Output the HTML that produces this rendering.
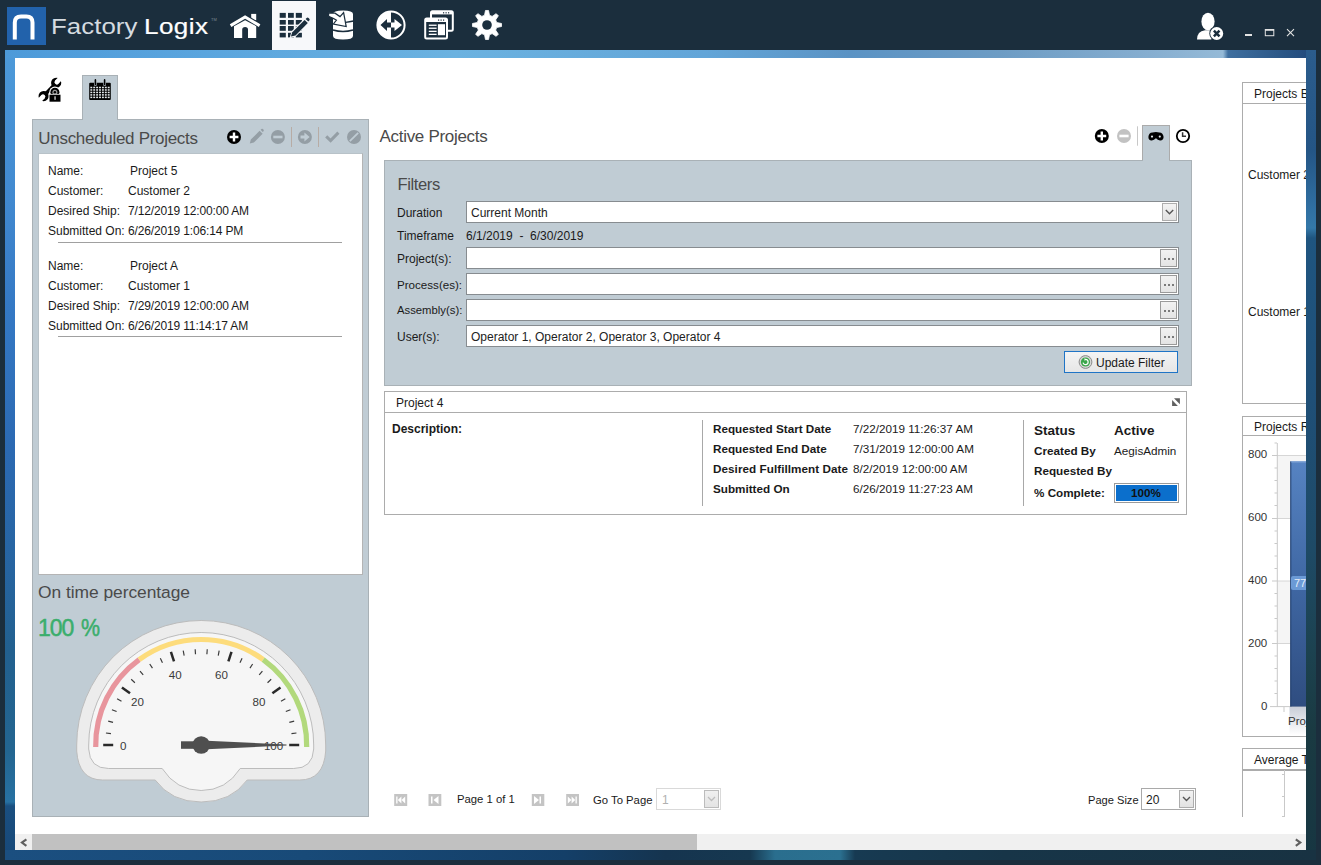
<!DOCTYPE html>
<html><head><meta charset="utf-8">
<style>
*{margin:0;padding:0;box-sizing:border-box}
html,body{width:1321px;height:865px;overflow:hidden;background:#1b2e3d;font-family:"Liberation Sans",sans-serif;color:#1a1a1a}
.a{position:absolute}
.t{position:absolute;line-height:1;white-space:nowrap;font-size:12px}
.b{font-weight:bold}
svg{position:absolute;overflow:visible}
#frame{left:5px;top:50px;width:10px;height:810px;
 background:linear-gradient(180deg,#4d9ad9 0px,#4189d0 150px,#3478c4 260px,#2b69b2 400px,#2664a0 520px,#22608f 600px,#236590 700px,#2771a2 752px,#1a4f80 756px,#174878 810px)}
#frameR{left:1306px;top:50px;width:10px;height:810px;background:linear-gradient(180deg,#2b5c8c 0,#245585 100px,#3070a2 160px,#3478a8 178px,#1f5580 188px,#1f4f77 350px,#1e4a66 500px,#1c4250 600px,#1a3a42 680px,#173642 810px)}
#frameT{left:5px;top:50px;width:1311px;height:8px;background:linear-gradient(90deg,#4d9ad9 0,#5aa5de 200px,#6bb2e0 450px,#62a5d8 700px,#5b93c4 845px,#6d9cc4 995px,#86aed0 1145px,#95bad7 1218px,#3f6f9f 1223px,#2a5585 1280px,#21487a 1311px)}
#frameB{left:5px;top:850px;width:1311px;height:10px;background:linear-gradient(90deg,#1b4f80 0,#184a78 300px,#143f68 560px,#15344f 660px,#163850 745px,#2a6e8e 770px,#2b7090 835px,#173a52 850px,#173548 1000px,#183242 1311px)}
#content{left:15px;top:58px;width:1291px;height:792px;background:#fff;overflow:hidden}
.panel{background:#c0ccd4;border:1px solid #a9b1b6}
.inp{position:absolute;background:#fff;border:1px solid #878c90;height:22px}
.dots{position:absolute;right:1px;top:1px;width:17px;height:18px;border:1px solid #9a9a9a;background:linear-gradient(#f2f2f2,#e4e4e4)}
.card{position:absolute;border:1px solid #acacac;background:#fff}
</style></head><body>
<div id="frame" class="a"></div>
<div id="frameT" class="a"></div>
<div id="frameR" class="a"></div>
<div id="frameB" class="a"></div>
<div id="content" class="a"></div>
<!-- HEADER -->
<div class="a" style="left:0;top:0;width:1321px;height:50px;background:#1b2e3d"></div>
<div class="a" style="left:7px;top:7px;width:39px;height:38px;background:#2262ab"></div>
<svg style="left:0;top:0" width="60" height="50"><path d="M14.8,39.5 V22.5 Q14.8,16.4 21,16.4 H26.4 Q32.5,16.4 32.5,22.5 V39.5" fill="none" stroke="#fff" stroke-width="4"/></svg>
<div class="t" style="left:51.3px;top:16.2px;font-size:21.7px;color:#d5dbe0;letter-spacing:0.05px;transform:scaleX(1.19);transform-origin:0 0">Factory</div>
<div class="t" style="left:144.2px;top:16.2px;font-size:21.7px;color:#fff;letter-spacing:0.35px;-webkit-text-stroke:0.2px #fff;transform:scaleX(1.2);transform-origin:0 0">Logix</div>
<div class="t" style="left:211px;top:17.6px;font-size:4px;color:#7d8a95">TM</div>
<!-- home -->
<svg style="left:0;top:0" width="270" height="50">
 <rect x="251.2" y="13.9" width="5" height="6.5" fill="#fff"/>
 <path d="M229.6,26.4 L245.1,17.2 L260.6,26.4" fill="none" stroke="#1b2e3d" stroke-width="5.6" stroke-linejoin="miter" stroke-linecap="butt"/>
 <path d="M230.6,25.6 L245.1,16.9 L259.6,25.6" fill="none" stroke="#fff" stroke-width="3" stroke-linejoin="miter" stroke-linecap="butt"/>
 <path d="M234,26.2 L245.1,20.3 L256.2,26.2 V38 H248 V29.4 Q248,26.9 245.1,26.9 Q242.2,26.9 242.2,29.4 V38 H234 Z" fill="#fff"/>
</svg>
<!-- selected tab -->
<div class="a" style="left:272px;top:1px;width:44px;height:49px;background:#f7f8fa"></div>
<svg style="left:0;top:0" width="320" height="50">
 <g fill="#1b2e3d"><rect x="279.7" y="12.9" width="6.1" height="4.9"/><rect x="288" y="12.9" width="5.8" height="4.9"/><rect x="295.8" y="12.9" width="6.1" height="4.9"/><rect x="279.7" y="20" width="6.1" height="4.6"/><rect x="288" y="20" width="5.8" height="4.6"/><rect x="295.8" y="20" width="6.1" height="4.6"/><rect x="279.7" y="26" width="6.1" height="4.8"/><rect x="288" y="26" width="5.8" height="4.8"/><rect x="295.8" y="26" width="6.1" height="4.8"/><rect x="279.7" y="32.8" width="6.1" height="4.6"/><rect x="288" y="32.8" width="5.8" height="4.6"/><rect x="295.8" y="32.8" width="6.1" height="4.6"/></g>
 <path d="M289.6,38.2 L291.4,31.6 L305,18 L309.6,22.6 L296,36.2 Z" fill="#f7f8fa"/>
 <path d="M290.9,36.6 L292.3,32.2 L304.6,19.9 L307.8,23.1 L295.5,35.4 Z" fill="#1b2e3d"/>
 <path d="M305.6,18.9 L306.6,17.9 Q307.6,17 308.6,18 L309.3,18.7 Q310.2,19.7 309.3,20.6 L308.3,21.6 Z" fill="#1b2e3d"/>
</svg>
<!-- database -->
<svg style="left:0;top:0" width="360" height="50">
 <path d="M333,14 Q333,10.4 343,10.4 Q353,10.4 353,14 V36 Q353,39.6 343,39.6 Q333,39.6 333,36 Z" fill="#fff"/>
 <path d="M333,30 Q343,33 353,30" fill="none" stroke="#1b2e3d" stroke-width="1.4"/>
 <path d="M345.5,22.4 Q349.5,22 353.5,21" fill="none" stroke="#1b2e3d" stroke-width="1.3"/>
 <path d="M328.6,12.8 L335,13.2 L340,16.6 L343.6,12.6 L346.2,26.6 L333.4,24 L336.4,20.2 L333.6,18.6 L328.6,16.2 Z" fill="#fff" stroke="#1b2e3d" stroke-width="1.2" stroke-linejoin="miter"/>
</svg>
<!-- arrows circle -->
<svg style="left:0;top:0" width="410" height="50">
 <circle cx="391" cy="25" r="13.6" fill="#1b2e3d" stroke="#fff" stroke-width="2"/>
 <path d="M391,11.4 A13.6,13.6 0 0 0 391,38.6 Z" fill="#fff"/>
 <path d="M380.5,25 L387,19 V22.5 H391 V27.5 H387 V31 Z" fill="#1b2e3d"/>
 <path d="M402,25 L394.5,19 V22.5 H391 V27.5 H394.5 V31 Z" fill="#fff"/>
</svg>
<!-- windows -->
<svg style="left:0;top:0" width="460" height="50">
 <rect x="431" y="11.2" width="21.8" height="19.5" rx="1.5" fill="none" stroke="#fff" stroke-width="2"/>
 <rect x="431" y="11.2" width="21.8" height="3.2" fill="#fff"/>
 <rect x="425.2" y="18.4" width="21.8" height="20.2" rx="1.5" fill="#1b2e3d" stroke="#fff" stroke-width="2"/>
 <rect x="425.2" y="18.4" width="21.8" height="3.6" fill="#fff"/>
 <g fill="#1b2e3d"><rect x="443" y="12.2" width="1.2" height="1.2"/><rect x="445.5" y="12.2" width="1.2" height="1.2"/><rect x="448" y="12.2" width="1.2" height="1.2"/>
 <rect x="438" y="19.5" width="1.2" height="1.2"/><rect x="440.5" y="19.5" width="1.2" height="1.2"/><rect x="443" y="19.5" width="1.2" height="1.2"/></g>
 <g fill="#fff"><rect x="428.8" y="24.6" width="7.8" height="1.3"/><rect x="428.8" y="27.6" width="7.8" height="1.3"/><rect x="428.8" y="30.7" width="7.8" height="1.3"/><rect x="428.8" y="33.7" width="7.8" height="1.3"/><rect x="437.9" y="24.2" width="7.1" height="11"/></g>
</svg>
<!-- gear -->
<svg style="left:0;top:0" width="510" height="50">
 <path d="M484.53,15.31 L485.47,10.48 L488.53,10.48 L489.47,15.31 A10.0,10.0 0 0 1 492.10,16.40 L492.10,16.40 L496.18,13.65 L498.35,15.82 L495.60,19.90 A10.0,10.0 0 0 1 496.69,22.53 L496.69,22.53 L501.52,23.47 L501.52,26.53 L496.69,27.47 A10.0,10.0 0 0 1 495.60,30.10 L495.60,30.10 L498.35,34.18 L496.18,36.35 L492.10,33.60 A10.0,10.0 0 0 1 489.47,34.69 L489.47,34.69 L488.53,39.52 L485.47,39.52 L484.53,34.69 A10.0,10.0 0 0 1 481.90,33.60 L481.90,33.60 L477.82,36.35 L475.65,34.18 L478.40,30.10 A10.0,10.0 0 0 1 477.31,27.47 L477.31,27.47 L472.48,26.53 L472.48,23.47 L477.31,22.53 A10.0,10.0 0 0 1 478.40,19.90 L478.40,19.90 L475.65,15.82 L477.82,13.65 L481.90,16.40 A10.0,10.0 0 0 1 484.53,15.31 Z" fill="#fff" stroke="#fff" stroke-width="0.8" stroke-linejoin="round"/>
 <circle cx="487" cy="25" r="4.8" fill="#1b2e3d"/>
</svg>
<!-- user / window buttons -->
<svg style="left:0;top:0" width="1321" height="50">
 <ellipse cx="1208" cy="21.5" rx="6.6" ry="8.8" fill="#fff"/>
 <path d="M1197,39.6 Q1197,31 1205,30.2 L1211,30.2 Q1216,31 1217,34 L1211,39.6 Z" fill="#fff"/>
 <circle cx="1216.7" cy="33.5" r="7.4" fill="#1b2e3d"/>
 <circle cx="1216.7" cy="33.5" r="6.5" fill="#fff"/>
 <circle cx="1216.7" cy="33.5" r="5.2" fill="#1b2e3d" opacity="0"/>
 <path d="M1213.9,30.7 L1219.5,36.3 M1219.5,30.7 L1213.9,36.3" stroke="#1b2e3d" stroke-width="2.5"/>
 <rect x="1245" y="34" width="7" height="2" fill="#e3e3e3"/>
 <rect x="1265.3" y="29.5" width="8.5" height="6.2" fill="none" stroke="#e3e3e3" stroke-width="1"/>
 <rect x="1265" y="29" width="9" height="1.8" fill="#e3e3e3"/>
 <path d="M1287,29.2 L1294,36.2 M1294,29.2 L1287,36.2" stroke="#e3e3e3" stroke-width="1.1"/>
</svg>

<!-- TABS -->
<svg style="left:0;top:0" width="130" height="125">
 <g transform="translate(49.9,89.45) rotate(-46.5)">
  <rect x="-7" y="-1.7" width="14" height="3.4" fill="#000"/>
  <circle cx="9.1" cy="0" r="5.1" fill="#000"/>
  <circle cx="10" cy="0" r="2.3" fill="#fff"/>
  <rect x="10" y="-2.3" width="6" height="4.6" fill="#fff"/>
  <circle cx="-9.1" cy="0" r="5.1" fill="#000"/>
  <circle cx="-10" cy="0" r="2.3" fill="#fff"/>
  <rect x="-16" y="-2.3" width="6" height="4.6" fill="#fff"/>
 </g>
 <circle cx="54.9" cy="92.2" r="5.6" fill="#fff"/>
 <circle cx="54.9" cy="92.2" r="4.5" fill="#000"/>
 <circle cx="54.9" cy="92.2" r="2.5" fill="#9a9a9a"/>
 <circle cx="54.9" cy="92.2" r="1.2" fill="#000"/>
 <rect x="48.7" y="93.9" width="12.6" height="8.6" fill="#fff"/>
 <rect x="49.5" y="94.7" width="11" height="7" fill="#000"/>
 <rect x="54.4" y="96.3" width="1.3" height="3.5" fill="#d8d8d8"/>
</svg>
<div class="a panel" style="left:82px;top:75px;width:36px;height:46px;border-bottom:none"></div>
<div class="a panel" style="left:32px;top:119px;width:337px;height:698px"></div>
<div class="a" style="left:83px;top:119px;width:34px;height:2px;background:#c0ccd4"></div>
<svg style="left:0;top:0" width="130" height="125">
 <rect x="89.2" y="82.8" width="21.6" height="17.2" rx="1" fill="#000"/>
 <g fill="#e4e9ec"><rect x="90.35" y="86.75" width="1.9" height="1.5"/><rect x="90.35" y="89.22" width="1.9" height="1.5"/><rect x="90.35" y="91.69" width="1.9" height="1.5"/><rect x="90.35" y="94.16" width="1.9" height="1.5"/><rect x="90.35" y="96.63" width="1.9" height="1.5"/><rect x="93.25" y="86.75" width="1.9" height="1.5"/><rect x="93.25" y="89.22" width="1.9" height="1.5"/><rect x="93.25" y="91.69" width="1.9" height="1.5"/><rect x="93.25" y="94.16" width="1.9" height="1.5"/><rect x="93.25" y="96.63" width="1.9" height="1.5"/><rect x="96.15" y="86.75" width="1.9" height="1.5"/><rect x="96.15" y="89.22" width="1.9" height="1.5"/><rect x="96.15" y="91.69" width="1.9" height="1.5"/><rect x="96.15" y="94.16" width="1.9" height="1.5"/><rect x="96.15" y="96.63" width="1.9" height="1.5"/><rect x="99.05" y="86.75" width="1.9" height="1.5"/><rect x="99.05" y="89.22" width="1.9" height="1.5"/><rect x="99.05" y="91.69" width="1.9" height="1.5"/><rect x="99.05" y="94.16" width="1.9" height="1.5"/><rect x="99.05" y="96.63" width="1.9" height="1.5"/><rect x="101.95" y="86.75" width="1.9" height="1.5"/><rect x="101.95" y="89.22" width="1.9" height="1.5"/><rect x="101.95" y="91.69" width="1.9" height="1.5"/><rect x="101.95" y="94.16" width="1.9" height="1.5"/><rect x="101.95" y="96.63" width="1.9" height="1.5"/><rect x="104.85" y="86.75" width="1.9" height="1.5"/><rect x="104.85" y="89.22" width="1.9" height="1.5"/><rect x="104.85" y="91.69" width="1.9" height="1.5"/><rect x="104.85" y="94.16" width="1.9" height="1.5"/><rect x="104.85" y="96.63" width="1.9" height="1.5"/><rect x="107.75" y="86.75" width="1.9" height="1.5"/><rect x="107.75" y="89.22" width="1.9" height="1.5"/><rect x="107.75" y="91.69" width="1.9" height="1.5"/><rect x="107.75" y="94.16" width="1.9" height="1.5"/><rect x="107.75" y="96.63" width="1.9" height="1.5"/></g>
 <rect x="94.1" y="78.6" width="2.6" height="7.4" rx="1.3" fill="#c0ccd4"/><rect x="103.3" y="78.6" width="2.6" height="7.4" rx="1.3" fill="#c0ccd4"/>
 <rect x="94.6" y="79.1" width="1.6" height="6.3" rx="0.8" fill="#000"/><rect x="103.8" y="79.1" width="1.6" height="6.3" rx="0.8" fill="#000"/>
</svg>

<!-- LEFT PANEL -->
<div class="t" style="left:38.3px;top:129.6px;font-size:17px;color:#4a4a4a;letter-spacing:-0.3px">Unscheduled Projects</div>
<svg style="left:0;top:0" width="370" height="160">
 <circle cx="234" cy="137" r="7" fill="#000"/>
 <path d="M234,132.6 V141.4 M229.6,137 H238.4" stroke="#fff" stroke-width="2.4"/>
 <path d="M249.8,143.6 L250.8,139.6 L259.6,130.8 L262.6,133.8 L253.8,142.6 Z" fill="#949ea5"/>
 <path d="M260.6,129.8 L261.4,129 Q262.2,128.4 262.9,129.1 L263.6,129.8 Q264.2,130.6 263.5,131.3 L262.7,132.1 Z" fill="#949ea5"/>
 <circle cx="277.9" cy="137" r="7" fill="#949ea5"/>
 <rect x="273.3" y="135.7" width="9.2" height="2.6" fill="#c0ccd4"/>
 <rect x="291" y="127" width="1" height="20" fill="#b7aca5"/>
 <circle cx="304.9" cy="137" r="7" fill="#949ea5"/>
 <path d="M300.5,135.6 H304.4 V132.4 L309.6,137 L304.4,141.6 V138.4 H300.5 Z" fill="#c0ccd4"/>
 <rect x="318" y="127" width="1" height="20" fill="#b7aca5"/>
 <path d="M326.2,136.4 L330.6,140.6 L338.4,132.6" fill="none" stroke="#949ea5" stroke-width="3"/>
 <circle cx="354" cy="137" r="7" fill="#949ea5"/>
 <path d="M349.8,141.2 L358.2,132.8" stroke="#c0ccd4" stroke-width="1.8"/>
</svg>
<div class="a" style="left:38px;top:153px;width:325px;height:422px;background:#fff;border-right:1px solid #b4b4b4;border-bottom:1px solid #b4b4b4;border-top:1px solid #b8c2c8;border-left:1px solid #b8c2c8"></div>
<div class="t" style="left:48px;top:165px">Name:</div><div class="t" style="left:130px;top:165px">Project 5</div>
<div class="t" style="left:48px;top:185px">Customer:</div><div class="t" style="left:128px;top:185px">Customer 2</div>
<div class="t" style="left:48px;top:205px">Desired Ship:</div><div class="t" style="left:128px;top:205px;letter-spacing:-0.15px">7/12/2019 12:00:00 AM</div>
<div class="t" style="left:48px;top:225px">Submitted On:</div><div class="t" style="left:128px;top:225px;letter-spacing:-0.15px">6/26/2019 1:06:14 PM</div>
<div class="a" style="left:58px;top:242px;width:284px;height:1px;background:#a0a0a0"></div>
<div class="t" style="left:48px;top:260px">Name:</div><div class="t" style="left:130px;top:260px">Project A</div>
<div class="t" style="left:48px;top:280px">Customer:</div><div class="t" style="left:128px;top:280px">Customer 1</div>
<div class="t" style="left:48px;top:300px">Desired Ship:</div><div class="t" style="left:128px;top:300px;letter-spacing:-0.15px">7/29/2019 12:00:00 AM</div>
<div class="t" style="left:48px;top:320px">Submitted On:</div><div class="t" style="left:128px;top:320px;letter-spacing:-0.15px">6/26/2019 11:14:17 AM</div>
<div class="a" style="left:58px;top:336px;width:284px;height:1px;background:#a0a0a0"></div>

<div class="t" style="left:38.1px;top:583.6px;font-size:17.4px;color:#4a4a4a;letter-spacing:-0.05px">On time percentage</div>
<div class="t" style="left:38px;top:617px;font-size:23px;color:#3aae6c;letter-spacing:-1.1px;-webkit-text-stroke:0.5px #3aae6c">100</div><div class="t" style="left:81px;top:617px;font-size:23px;color:#3aae6c;-webkit-text-stroke:0.5px #3aae6c;transform:scaleX(0.93);transform-origin:0 0">%</div>

<svg style="left:0;top:0" width="340" height="820">
<path d="M76.7,745.0 A124.5,124.5 0 0 1 325.7,745.0 L325.7,751.0 Q323.7,780.0 299.7,780.0 L247.2,780.0 Q231.2,802.0 201.2,802.0 Q171.2,802.0 155.2,780.0 L102.69999999999999,780.0 Q78.69999999999999,780.0 76.7,751.0 Z" fill="#ececec" stroke="#bcbcbc" stroke-width="1"/>
<path d="M88.7,745.0 A112.5,112.5 0 0 1 313.7,745.0 L313.7,749.0 Q312.7,768.5 293.7,768.5 L240.2,768.5 Q226.2,790.5 201.2,790.5 Q176.2,790.5 162.2,768.5 L108.69999999999999,768.5 Q89.69999999999999,768.5 88.7,749.0 Z" fill="#f6f6f6" stroke="#b5b5b5" stroke-width="0.9"/>
<path d="M95.72,746.99 A105.5,105.5 0 0 1 139.19,659.65" fill="none" stroke="#e8959d" stroke-width="5.2"/>
<path d="M139.19,659.65 A105.5,105.5 0 0 1 263.21,659.65" fill="none" stroke="#fddc7c" stroke-width="5.2"/>
<path d="M263.21,659.65 A105.5,105.5 0 0 1 306.68,746.99" fill="none" stroke="#b2d97c" stroke-width="5.2"/>
<line x1="110.92" y1="733.59" x2="105.96" y2="732.97" stroke="#3a3a3a" stroke-width="1.15"/>
<line x1="113.06" y1="722.37" x2="108.22" y2="721.13" stroke="#3a3a3a" stroke-width="1.15"/>
<line x1="116.59" y1="711.50" x2="111.94" y2="709.66" stroke="#3a3a3a" stroke-width="1.15"/>
<line x1="121.46" y1="701.16" x2="117.07" y2="698.75" stroke="#3a3a3a" stroke-width="1.15"/>
<line x1="134.86" y1="682.71" x2="131.22" y2="679.28" stroke="#3a3a3a" stroke-width="1.15"/>
<line x1="143.19" y1="674.88" x2="140.01" y2="671.03" stroke="#3a3a3a" stroke-width="1.15"/>
<line x1="152.44" y1="668.17" x2="149.76" y2="663.94" stroke="#3a3a3a" stroke-width="1.15"/>
<line x1="162.45" y1="662.66" x2="160.33" y2="658.14" stroke="#3a3a3a" stroke-width="1.15"/>
<line x1="184.15" y1="655.61" x2="183.21" y2="650.70" stroke="#3a3a3a" stroke-width="1.15"/>
<line x1="195.49" y1="654.18" x2="195.17" y2="649.19" stroke="#3a3a3a" stroke-width="1.15"/>
<line x1="206.91" y1="654.18" x2="207.23" y2="649.19" stroke="#3a3a3a" stroke-width="1.15"/>
<line x1="218.25" y1="655.61" x2="219.19" y2="650.70" stroke="#3a3a3a" stroke-width="1.15"/>
<line x1="239.95" y1="662.66" x2="242.07" y2="658.14" stroke="#3a3a3a" stroke-width="1.15"/>
<line x1="249.96" y1="668.17" x2="252.64" y2="663.94" stroke="#3a3a3a" stroke-width="1.15"/>
<line x1="259.21" y1="674.88" x2="262.39" y2="671.03" stroke="#3a3a3a" stroke-width="1.15"/>
<line x1="267.54" y1="682.71" x2="271.18" y2="679.28" stroke="#3a3a3a" stroke-width="1.15"/>
<line x1="280.94" y1="701.16" x2="285.33" y2="698.75" stroke="#3a3a3a" stroke-width="1.15"/>
<line x1="285.81" y1="711.50" x2="290.46" y2="709.66" stroke="#3a3a3a" stroke-width="1.15"/>
<line x1="289.34" y1="722.37" x2="294.18" y2="721.13" stroke="#3a3a3a" stroke-width="1.15"/>
<line x1="291.48" y1="733.59" x2="296.44" y2="732.97" stroke="#3a3a3a" stroke-width="1.15"/>
<line x1="113.20" y1="745.00" x2="103.20" y2="745.00" stroke="#2a2a2a" stroke-width="2.5"/>
<line x1="130.01" y1="693.27" x2="121.92" y2="687.40" stroke="#2a2a2a" stroke-width="2.5"/>
<line x1="174.01" y1="661.31" x2="170.92" y2="651.80" stroke="#2a2a2a" stroke-width="2.5"/>
<line x1="228.39" y1="661.31" x2="231.48" y2="651.80" stroke="#2a2a2a" stroke-width="2.5"/>
<line x1="272.39" y1="693.27" x2="280.48" y2="687.40" stroke="#2a2a2a" stroke-width="2.5"/>
<line x1="289.20" y1="745.00" x2="299.20" y2="745.00" stroke="#2a2a2a" stroke-width="2.5"/>
<text x="123.2" y="750.0" text-anchor="middle" font-family="Liberation Sans" font-size="11.6" fill="#3a3a3a">0</text>
<text x="137.5" y="706.0" text-anchor="middle" font-family="Liberation Sans" font-size="11.6" fill="#3a3a3a">20</text>
<text x="175.2" y="679.0" text-anchor="middle" font-family="Liberation Sans" font-size="11.6" fill="#3a3a3a">40</text>
<text x="221.5" y="679.0" text-anchor="middle" font-family="Liberation Sans" font-size="11.6" fill="#3a3a3a">60</text>
<text x="259.0" y="706.0" text-anchor="middle" font-family="Liberation Sans" font-size="11.6" fill="#3a3a3a">80</text>
<text x="273.6" y="750.0" text-anchor="middle" font-family="Liberation Sans" font-size="11.6" fill="#3a3a3a">100</text>
<rect x="181" y="741.3" width="20" height="7.5" fill="#4f4f4f"/>
<path d="M201.2,740.4 L286.5,744.6 L286.5,745.4 L201.2,749.6 Z" fill="#4f4f4f"/>
<circle cx="201.2" cy="745.0" r="8.8" fill="#4f4f4f"/>
</svg>
<!-- CENTER -->
<div class="t" style="left:379.5px;top:128.2px;font-size:17px;color:#4a4a4a;letter-spacing:-0.3px">Active Projects</div>
<svg style="left:0;top:0" width="1200" height="170">
 <circle cx="1101.8" cy="136" r="7" fill="#000"/>
 <path d="M1101.8,131.6 V140.4 M1097.4,136 H1106.2" stroke="#fff" stroke-width="2.4"/>
 <circle cx="1124" cy="136" r="7" fill="#c2c2c2"/>
 <rect x="1119.4" y="134.7" width="9.2" height="2.6" fill="#fff"/>
 <rect x="1137" y="126.3" width="1" height="19.4" fill="#c8c8c8"/>
</svg>
<div class="a" style="left:1142px;top:125px;width:28px;height:36px;background:#c0ccd4;border:1px solid #ababab;border-bottom:none"></div>
<div class="a panel" style="left:384px;top:160px;width:808px;height:226px"></div>
<div class="a" style="left:1143px;top:160px;width:26px;height:2px;background:#c0ccd4"></div>
<svg style="left:0;top:0" width="1200" height="170">
 <path d="M1148.4,137 Q1148.6,132.6 1152.5,132.4 Q1155.9,131.6 1159.3,132.4 Q1163.2,132.6 1163.6,137 Q1163.4,140.6 1160,140.4 Q1157.4,140 1156.4,138.6 H1155.4 Q1154.4,140 1151.8,140.4 Q1148.4,140.6 1148.4,137 Z" fill="#000"/>
 <circle cx="1152" cy="136.6" r="1.1" fill="#dfe5e9"/><circle cx="1159.8" cy="136.6" r="1.1" fill="#dfe5e9"/>
 <circle cx="1183" cy="136" r="6.2" fill="none" stroke="#000" stroke-width="1.8"/>
 <path d="M1182.6,132.3 V136.2 H1186" fill="none" stroke="#333" stroke-width="1.5"/>
</svg>

<div class="t" style="left:397.5px;top:177px;font-size:16.6px;color:#4a4a4a;letter-spacing:-0.4px">Filters</div>
<div class="t" style="left:397px;top:206.5px">Duration</div>
<div class="inp" style="left:466px;top:201px;width:713px"></div>
<div class="t" style="left:471px;top:206.5px;color:#222">Current Month</div>
<div class="a" style="left:1162px;top:203px;width:15px;height:18px;border:1px solid #adadad;background:linear-gradient(#f3f3f3,#e2e2e2)"></div>
<svg style="left:0;top:0" width="1200" height="230"><path d="M1165.8,210 L1169.5,213.8 L1173.2,210" fill="none" stroke="#555" stroke-width="1.4"/></svg>
<div class="t" style="left:397px;top:230px">Timeframe</div>
<div class="t" style="left:466px;top:230px">6/1/2019&nbsp; -&nbsp; 6/30/2019</div>
<div class="t" style="left:397px;top:252.8px">Project(s):</div>
<div class="inp" style="left:466px;top:247px;width:713px"><div class="dots"></div></div>
<div class="t" style="left:397px;top:279px;font-size:11.6px">Process(es):</div>
<div class="inp" style="left:466px;top:273px;width:713px"><div class="dots"></div></div>
<div class="t" style="left:397px;top:305px;font-size:11.3px">Assembly(s):</div>
<div class="inp" style="left:466px;top:299px;width:713px"><div class="dots"></div></div>
<div class="t" style="left:397px;top:331px">User(s):</div>
<div class="inp" style="left:466px;top:325px;width:713px"><div class="dots"></div></div>
<div class="t" style="left:471px;top:331px;color:#222">Operator 1, Operator 2, Operator 3, Operator 4</div>
<svg style="left:0;top:0" width="1200" height="360">
 <g fill="#7a7a7a">
  <rect x="1164" y="258" width="2" height="2"/><rect x="1168" y="258" width="2" height="2"/><rect x="1172" y="258" width="2" height="2"/>
  <rect x="1164" y="284" width="2" height="2"/><rect x="1168" y="284" width="2" height="2"/><rect x="1172" y="284" width="2" height="2"/>
  <rect x="1164" y="310" width="2" height="2"/><rect x="1168" y="310" width="2" height="2"/><rect x="1172" y="310" width="2" height="2"/>
  <rect x="1164" y="336" width="2" height="2"/><rect x="1168" y="336" width="2" height="2"/><rect x="1172" y="336" width="2" height="2"/>
 </g>
</svg>
<div class="a" style="left:1064px;top:351px;width:114px;height:22px;border:1px solid #1f74c6;background:linear-gradient(#f4f4f4,#e6e6e6)"></div>
<svg style="left:0;top:0" width="1200" height="380">
 <circle cx="1085.5" cy="362" r="6.4" fill="#d8d8d8" stroke="#8a8a8a" stroke-width="1"/>
 <circle cx="1085.5" cy="362" r="4.6" fill="#3aa64a"/>
 <path d="M1083,362.6 A2.6,2.6 0 1 0 1085.3,359.4" fill="none" stroke="#fff" stroke-width="1.2"/>
 <path d="M1084.4,358.2 L1086.6,359.5 L1084.6,360.8 Z" fill="#fff"/>
</svg>
<div class="t" style="left:1096px;top:356.5px;color:#1a1a1a">Update Filter</div>

<!-- CARD -->
<div class="card" style="left:384px;top:391px;width:803px;height:124px"></div>
<div class="a" style="left:385px;top:412px;width:801px;height:1px;background:#acacac"></div>
<div class="t" style="left:396px;top:397px">Project 4</div>
<svg style="left:0;top:0" width="1200" height="420"><path d="M1174,398.2 H1179.9 V404.2 Z M1172.1,400 V405.9 H1177.9 Z" fill="#606060"/></svg>
<div class="t b" style="left:392px;top:422.5px">Description:</div>
<div class="a" style="left:702px;top:420px;width:1px;height:86px;background:#a8a8a8"></div>
<div class="a" style="left:1023px;top:420px;width:1px;height:86px;background:#a8a8a8"></div>
<div class="t b" style="left:713px;top:422.5px;font-size:11.7px">Requested Start Date</div><div class="t" style="left:853px;top:422.5px;font-size:11.7px">7/22/2019 11:26:37 AM</div>
<div class="t b" style="left:713px;top:442.5px;font-size:11.7px">Requested End Date</div><div class="t" style="left:853px;top:442.5px;font-size:11.7px">7/31/2019 12:00:00 AM</div>
<div class="t b" style="left:713px;top:462.5px;font-size:11.7px;letter-spacing:0.05px">Desired Fulfillment Date</div><div class="t" style="left:853px;top:462.5px;font-size:11.7px">8/2/2019 12:00:00 AM</div>
<div class="t b" style="left:713px;top:482.5px;font-size:11.7px">Submitted On</div><div class="t" style="left:853px;top:482.5px;font-size:11.7px">6/26/2019 11:27:23 AM</div>
<div class="t b" style="left:1034px;top:424px;font-size:13.5px">Status</div><div class="t b" style="left:1114px;top:424px;font-size:13.5px">Active</div>
<div class="t b" style="left:1034px;top:445px;font-size:11.7px">Created By</div><div class="t" style="left:1114px;top:445px;font-size:11.7px">AegisAdmin</div>
<div class="t b" style="left:1034px;top:465px;font-size:11.7px">Requested By</div>
<div class="t b" style="left:1034px;top:486.5px;font-size:11.7px">% Complete:</div>
<div class="a" style="left:1114px;top:483px;width:65px;height:20px;border:1px solid #9a9a9a;background:#fff;padding:1px"><div style="width:100%;height:100%;background:#0b6fcc"></div></div>
<div class="t b" style="left:1114px;top:487px;width:64px;text-align:center;font-size:11.7px;color:#111">100%</div>

<!-- PAGER -->
<svg style="left:0;top:0" width="740" height="820">
 <g fill="#c4c4c4">
  <rect x="394.2" y="794" width="13" height="12"/>
  <rect x="428.5" y="794" width="12.8" height="12"/>
  <rect x="531.8" y="794" width="12.5" height="12"/>
  <rect x="566.2" y="794" width="12.8" height="12"/>
 </g>
 <g fill="#fff">
  <rect x="396.2" y="796.5" width="1.3" height="7"/><path d="M397.8,800 L401.4,796.5 V803.5 Z M401.6,800 L405.2,796.5 V803.5 Z"/>
  <rect x="431" y="796.5" width="1.5" height="7"/><path d="M433.5,800 L438.5,796 V804 Z"/>
  <rect x="539.5" y="796.5" width="1.5" height="7"/><path d="M539,800 L534,796 V804 Z"/>
  <rect x="575.5" y="796.5" width="1.3" height="7"/><path d="M575.2,800 L571.6,796.5 V803.5 Z M571.4,800 L567.8,796.5 V803.5 Z"/>
 </g>
</svg>
<div class="t" style="left:457px;top:794px;font-size:11.3px;color:#1a1a1a">Page 1 of 1</div>
<div class="t" style="left:593px;top:795px;font-size:11.3px;color:#1a1a1a">Go To Page</div>
<div class="a" style="left:656px;top:788px;width:65px;height:22px;border:1px solid #d9d9d9;background:#fff"></div>
<div class="t" style="left:662px;top:794px;font-size:12px;color:#b0b0b0">1</div>
<div class="a" style="left:704px;top:790px;width:15px;height:18px;border:1px solid #bcbcbc;background:linear-gradient(#f0f0f0,#e4e4e4)"></div>
<svg style="left:0;top:0" width="1200" height="820"><path d="M708,797 L711.5,800.5 L715,797" fill="none" stroke="#bdbdbd" stroke-width="1.3"/>
</svg>
<div class="t" style="left:1088px;top:795px;font-size:11.1px;color:#1a1a1a">Page Size</div>
<div class="a" style="left:1141px;top:788px;width:55px;height:22px;border:1px solid #a9a9a9;background:#fff"></div>
<div class="t" style="left:1146px;top:794px;font-size:12px;color:#222">20</div>
<div class="a" style="left:1179px;top:790px;width:15px;height:18px;border:1px solid #adadad;background:linear-gradient(#f3f3f3,#e2e2e2)"></div>
<svg style="left:0;top:0" width="1200" height="820"><path d="M1183,797 L1186.5,800.5 L1190,797" fill="none" stroke="#555" stroke-width="1.4"/></svg>

<!-- RIGHT PANEL -->
<div class="a" style="left:1230px;top:58px;width:76px;height:759px;overflow:hidden">
 <div class="card" style="left:12px;top:24px;width:200px;height:322px"></div>
 <div class="a" style="left:13px;top:45px;width:200px;height:1px;background:#acacac"></div>
 <div class="t" style="left:24px;top:29.5px">Projects By Customer</div>
 <div class="t" style="left:18px;top:110.5px">Customer 2</div>
 <div class="t" style="left:18px;top:247.5px">Customer 1</div>

 <div class="card" style="left:12px;top:357.5px;width:200px;height:321.5px"></div>
 <div class="a" style="left:13px;top:377px;width:200px;height:1px;background:#acacac"></div>
 <div class="t" style="left:24px;top:362.6px">Projects Remaining</div>
 <svg style="left:0;top:0" width="80" height="780">
  <rect x="47.5" y="397.5" width="40" height="63" fill="#f5f5f5"/><rect x="47.5" y="523" width="40" height="62.5" fill="#f5f5f5"/>
  <g stroke="#d6d6d6" stroke-width="1"><line x1="47" y1="397.5" x2="80" y2="397.5"/><line x1="47" y1="460.5" x2="80" y2="460.5"/><line x1="47" y1="523" x2="80" y2="523"/><line x1="47" y1="585.5" x2="80" y2="585.5"/></g>
  <line x1="47.3" y1="385" x2="47.3" y2="649" stroke="#c9c9c9" stroke-width="1"/>
  <line x1="40" y1="648.6" x2="80" y2="648.6" stroke="#c9c9c9" stroke-width="1"/>
  <g stroke="#c9c9c9" stroke-width="1">
   <line x1="42" y1="397.5" x2="47" y2="397.5"/><line x1="42" y1="460.5" x2="47" y2="460.5"/><line x1="42" y1="523" x2="47" y2="523"/><line x1="42" y1="585.5" x2="47" y2="585.5"/>
   <line x1="44.5" y1="385" x2="47" y2="385"/><line x1="44.5" y1="410" x2="47" y2="410"/><line x1="44.5" y1="422.5" x2="47" y2="422.5"/><line x1="44.5" y1="435" x2="47" y2="435"/><line x1="44.5" y1="447.5" x2="47" y2="447.5"/>
   <line x1="44.5" y1="473" x2="47" y2="473"/><line x1="44.5" y1="485.5" x2="47" y2="485.5"/><line x1="44.5" y1="498" x2="47" y2="498"/><line x1="44.5" y1="510.5" x2="47" y2="510.5"/>
   <line x1="44.5" y1="535.5" x2="47" y2="535.5"/><line x1="44.5" y1="548" x2="47" y2="548"/><line x1="44.5" y1="560.5" x2="47" y2="560.5"/><line x1="44.5" y1="573" x2="47" y2="573"/>
   <line x1="44.5" y1="598" x2="47" y2="598"/><line x1="44.5" y1="610.5" x2="47" y2="610.5"/><line x1="44.5" y1="623" x2="47" y2="623"/><line x1="44.5" y1="635.5" x2="47" y2="635.5"/>
   <line x1="54" y1="649" x2="54" y2="654"/><line x1="68" y1="649" x2="68" y2="654"/>
  </g>
  <defs><linearGradient id="bar" x1="0" y1="0" x2="0" y2="1"><stop offset="0" stop-color="#5683c2"/><stop offset="0.5" stop-color="#3f67a3"/><stop offset="1" stop-color="#2f4d80"/></linearGradient>
  <linearGradient id="xl" x1="0" y1="0" x2="0" y2="1"><stop offset="0" stop-color="#c9ced8"/><stop offset="1" stop-color="#ffffff"/></linearGradient></defs>
  <rect x="60.3" y="403.4" width="30" height="245.2" fill="url(#bar)"/>
  <rect x="60.3" y="403.4" width="1" height="245.2" fill="#24416e"/><rect x="61.3" y="403.4" width="29" height="1.2" fill="#7aa0d4"/>
  <rect x="61" y="518" width="20" height="14" rx="2" fill="#6b9ad6"/>
  <text x="64" y="529" font-family="Liberation Sans" font-size="11" fill="#e8eef8">77</text>
  <rect x="59.5" y="649" width="30" height="28" fill="url(#xl)"/>
 </svg>
 <div class="t" style="left:18px;top:390.5px;font-size:11.5px;color:#333">800</div>
 <div class="t" style="left:18px;top:453.5px;font-size:11.5px;color:#333">600</div>
 <div class="t" style="left:18px;top:516.5px;font-size:11.5px;color:#333">400</div>
 <div class="t" style="left:18px;top:579.5px;font-size:11.5px;color:#333">200</div>
 <div class="t" style="left:31px;top:642.5px;font-size:11.5px;color:#333">0</div>
 <div class="t" style="left:58px;top:658px;font-size:11.5px;color:#333">Projects</div>

 <div class="card" style="left:12px;top:690px;width:200px;height:200px"></div>
 <div class="a" style="left:13px;top:711px;width:200px;height:1.5px;background:#acacac"></div>
 <div class="t" style="left:24px;top:695.8px">Average Time</div>
 <div class="a" style="left:54px;top:712px;width:1px;height:48px;background:#c9c9c9"></div>
 <div class="a" style="left:51.5px;top:716px;width:3px;height:1px;background:#c9c9c9"></div>
 <div class="a" style="left:51.5px;top:737.5px;width:3px;height:1px;background:#c9c9c9"></div>
 <div class="a" style="left:51.5px;top:758px;width:3px;height:1px;background:#c9c9c9"></div>
</div>
<!-- scrollbar -->
<div class="a" style="left:15px;top:834px;width:1291px;height:16px;background:#f0f0f0"></div>
<div class="a" style="left:32px;top:834px;width:665px;height:16px;background:#c1c1c1"></div>
<svg style="left:0;top:0" width="1321" height="860"><path d="M26.4,839.3 L21.9,842.6 L26.4,845.9" fill="none" stroke="#606060" stroke-width="2.1"/><path d="M1295.8,839.3 L1300.3,842.6 L1295.8,845.9" fill="none" stroke="#606060" stroke-width="2.1"/></svg>

</body></html>
